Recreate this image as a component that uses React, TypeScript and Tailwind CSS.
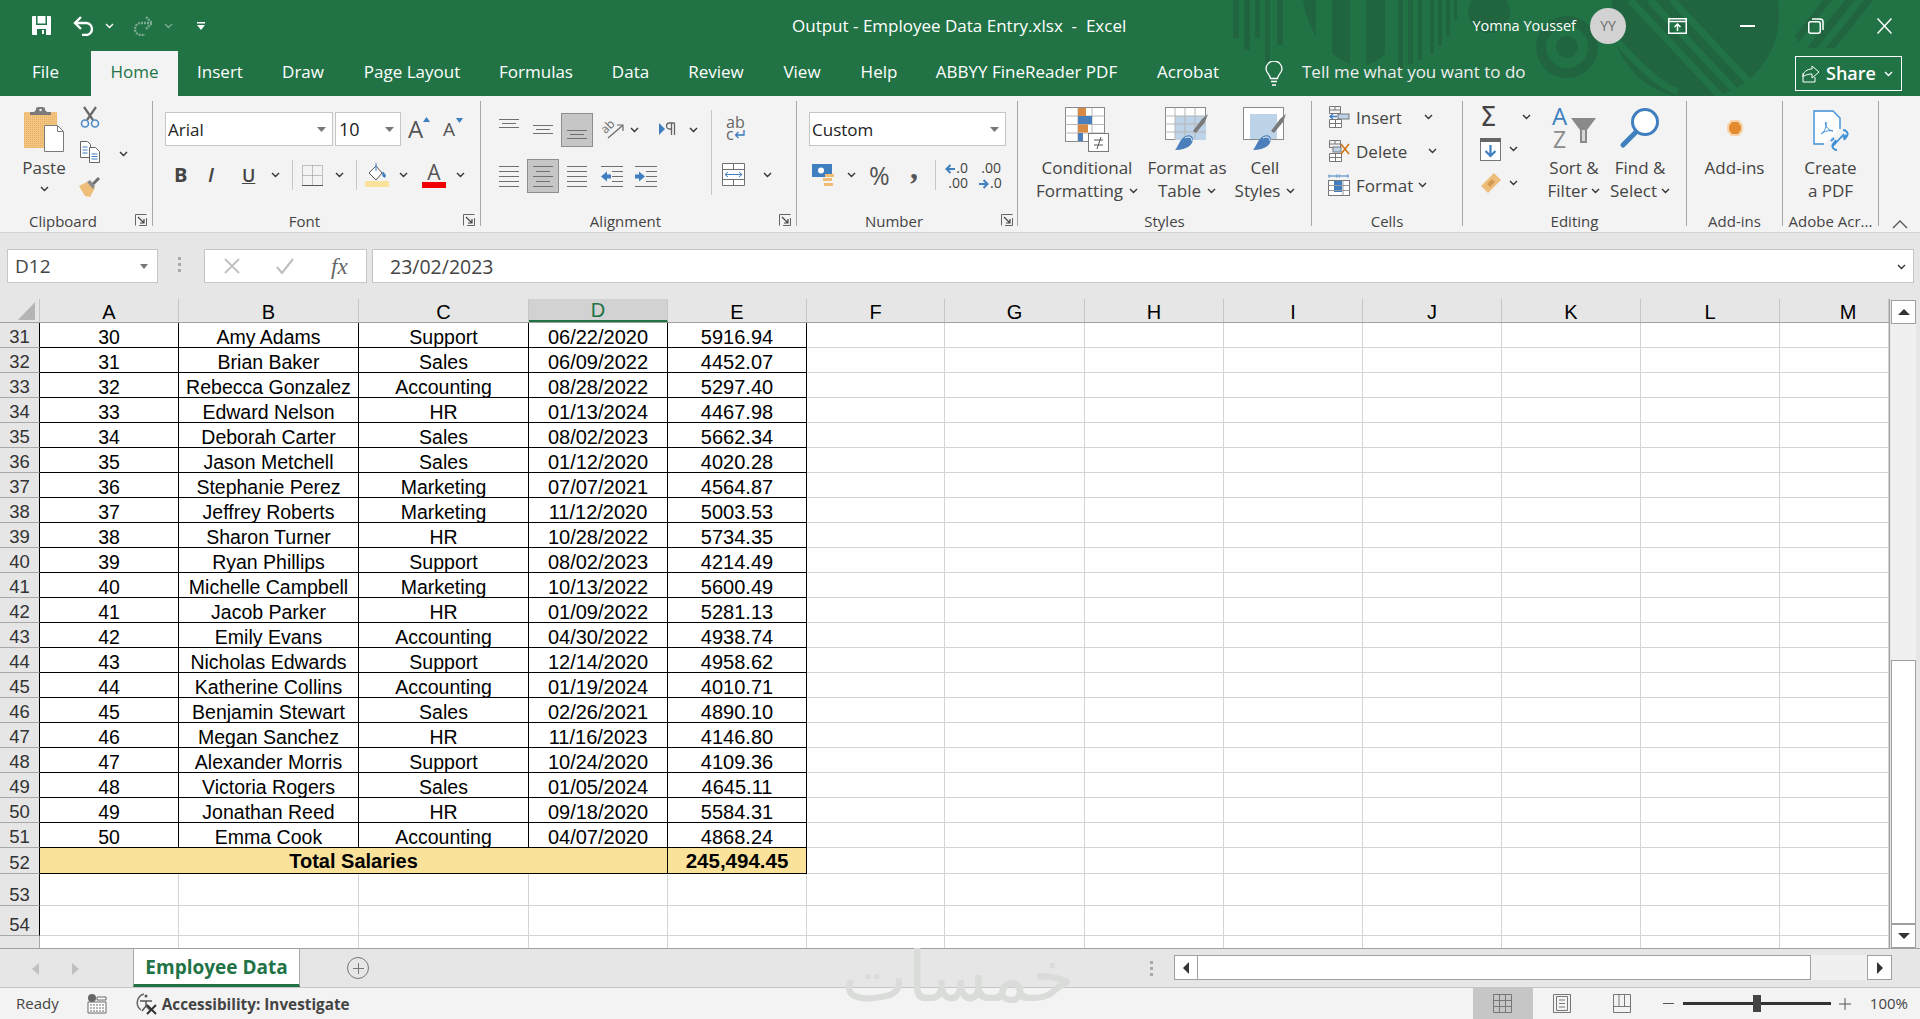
import React from 'react';

const rows: [number, string, string, string, string][] = [
  [30, 'Amy Adams', 'Support', '06/22/2020', '5916.94'],
  [31, 'Brian Baker', 'Sales', '06/09/2022', '4452.07'],
  [32, 'Rebecca Gonzalez', 'Accounting', '08/28/2022', '5297.40'],
  [33, 'Edward Nelson', 'HR', '01/13/2024', '4467.98'],
  [34, 'Deborah Carter', 'Sales', '08/02/2023', '5662.34'],
  [35, 'Jason Metchell', 'Sales', '01/12/2020', '4020.28'],
  [36, 'Stephanie Perez', 'Marketing', '07/07/2021', '4564.87'],
  [37, 'Jeffrey Roberts', 'Marketing', '11/12/2020', '5003.53'],
  [38, 'Sharon Turner', 'HR', '10/28/2022', '5734.35'],
  [39, 'Ryan Phillips', 'Support', '08/02/2023', '4214.49'],
  [40, 'Michelle Campbell', 'Marketing', '10/13/2022', '5600.49'],
  [41, 'Jacob Parker', 'HR', '01/09/2022', '5281.13'],
  [42, 'Emily Evans', 'Accounting', '04/30/2022', '4938.74'],
  [43, 'Nicholas Edwards', 'Support', '12/14/2020', '4958.62'],
  [44, 'Katherine Collins', 'Accounting', '01/19/2024', '4010.71'],
  [45, 'Benjamin Stewart', 'Sales', '02/26/2021', '4890.10'],
  [46, 'Megan Sanchez', 'HR', '11/16/2023', '4146.80'],
  [47, 'Alexander Morris', 'Support', '10/24/2020', '4109.36'],
  [48, 'Victoria Rogers', 'Sales', '01/05/2024', '4645.11'],
  [49, 'Jonathan Reed', 'HR', '09/18/2020', '5584.31'],
  [50, 'Emma Cook', 'Accounting', '04/07/2020', '4868.24'],
];

const tabs: [string, string][] = [
  ['File', 'w-[91px]'],
  ['Home', 'w-[87px] bg-[#f3f3f3] text-[#217346]'],
  ['Insert', 'w-[84px]'],
  ['Draw', 'w-[82px]'],
  ['Page Layout', 'w-[136px]'],
  ['Formulas', 'w-[112px]'],
  ['Data', 'w-[77px]'],
  ['Review', 'w-[94px]'],
  ['View', 'w-[78px]'],
  ['Help', 'w-[76px]'],
  ['ABBYY FineReader PDF', 'w-[219px]'],
  ['Acrobat', 'w-[104px]'],
];

const dataCols = ['w-[139px]', 'w-[180px]', 'w-[170px]', 'w-[139px]', 'w-[139px]'];
const emptyCols = ['w-[138px]', 'w-[140px]', 'w-[139px]', 'w-[139px]', 'w-[139px]', 'w-[139px]', 'w-[139px]', 'flex-1'];
const headers: [string, string][] = [
  ['A', 'w-[139px]'],
  ['B', 'w-[180px]'],
  ['C', 'w-[170px]'],
  ['D', 'w-[139px] bg-[#d2d2d2] text-[#217346] border-b-2 border-b-[#217346]'],
  ['E', 'w-[139px]'],
  ['F', 'w-[138px]'],
  ['G', 'w-[140px]'],
  ['H', 'w-[139px]'],
  ['I', 'w-[139px]'],
  ['J', 'w-[139px]'],
  ['K', 'w-[139px]'],
  ['L', 'w-[139px]'],
  ['M', 'flex-1 pl-[28px]'],
];

const Chev = ({ className = '', color = '#333' }: { className?: string; color?: string }) => (
  <svg width="9" height="6" viewBox="0 0 9 6" className={`shrink-0 ${className}`}>
    <path d="M1 1l3.5 3.5L8 1" fill="none" stroke={color} strokeWidth="1.4" />
  </svg>
);

const Launcher = ({ className }: { className: string }) => (
  <svg width="12" height="12" viewBox="0 0 12 12" className={`absolute bottom-[0px] ${className}`}>
    <path d="M.5 11.5V.5h11M11.5 4v7.5H4" fill="none" stroke="#666" />
    <path d="M3 3l6 6M9 5v4H5" fill="none" stroke="#444" strokeWidth="1.2" />
  </svg>
);

const Lines = ({ w, ys, inset = [] }: { w: number; ys: number[]; inset?: number[] }) => (
  <svg width={w} height={Math.max(...ys) + 1} className="shrink-0">
    {ys.map((y, i) => (
      <rect key={y} x={inset[i] || 0} y={y} width={w - 2 * (inset[i] || 0)} height="1" fill="#707070" />
    ))}
  </svg>
);

const ArrowL = () => (
  <svg width="10" height="10" viewBox="0 0 10 10" className="mr-[1px] inline">
    <path d="M10 5H2M5.500 1L1.500 5l4 4" fill="none" stroke="#3f7fbf" strokeWidth="2" />
  </svg>
);

const ArrowR = () => (
  <svg width="10" height="10" viewBox="0 0 10 10" className="mr-[1px] inline">
    <path d="M0 5h8M4.500 1l4 4-4 4" fill="none" stroke="#3f7fbf" strokeWidth="2" />
  </svg>
);

const Group = ({
  width,
  label,
  labelPad = '',
  launcher,
  children,
}: {
  width: string;
  label: string;
  labelPad?: string;
  launcher?: string;
  children: React.ReactNode;
}) => (
  <div className={`relative flex shrink-0 flex-col border-r border-[#a8a8a8] ${width}`}>
    <div className="flex min-h-0 flex-1">{children}</div>
    <div className={`h-[12px] text-center text-[15px] leading-[14px] text-[#444] ${labelPad}`}>{label}</div>
    {launcher && <Launcher className={launcher} />}
  </div>
);

const PasteIcon = () => (
  <svg width="40" height="45" viewBox="0 0 40 45">
    <defs>
      <pattern id="dots" width="2" height="2" patternUnits="userSpaceOnUse">
        <rect width="2" height="2" fill="#f3c583" />
        <rect width="1" height="1" fill="#e8ad5d" />
      </pattern>
    </defs>
    <rect x="0" y="5" width="33" height="36" rx="1" fill="url(#dots)" />
    <path d="M6 5h4l2-2V1.5C12 .5 13 0 16.500 0s4.500.5 4.500 1.500V3l2 2h4v3H6z" fill="#7a7a7a" />
    <circle cx="16.500" cy="3" r="1.200" fill="#f3f3f3" />
    <path d="M20.500 18.500h13l6 6v20h-19z" fill="#fff" stroke="#7a7a7a" />
    <path d="M33.500 18.500v6h6" fill="none" stroke="#7a7a7a" />
  </svg>
);

const CutIcon = () => (
  <svg width="20" height="22" viewBox="0 0 20 22">
    <path d="M4 1l9 13M16 1L7 14" stroke="#6a6a6a" strokeWidth="2.200" fill="none" />
    <circle cx="5" cy="17.500" r="3.500" fill="none" stroke="#4d8ac6" strokeWidth="1.600" />
    <circle cx="15" cy="17.500" r="3.500" fill="none" stroke="#4d8ac6" strokeWidth="1.600" />
  </svg>
);

const CopyIcon = () => (
  <svg width="20" height="22" viewBox="0 0 20 22">
    <path d="M.5.5h7l3 3v13H.5z" fill="#fff" stroke="#666" />
    <path d="M9.500 6.500h6l4 4v11h-10z" fill="#fff" stroke="#666" />
    <path d="M2.500 6h5M2.500 9h5M2.500 12h5M11.500 13h6M11.500 15.500h6M11.500 18h6" stroke="#3f7fbf" />
  </svg>
);

const PainterIcon = () => (
  <svg width="22" height="21" viewBox="0 0 22 21">
    <path d="M0 10l8-4 8 6-5 9-5-1-3-5z" fill="#efbd7a" />
    <path d="M8 6l3-2 5 6-2 3z" fill="#8a8a8a" />
    <path d="M13 7l6-6 2 2-6 6z" fill="#6e6e6e" />
  </svg>
);

const OrientIcon = () => (
  <svg width="22" height="20" viewBox="0 0 22 20">
    <text x="0" y="11" transform="rotate(-45 7 9)" fontSize="12" fill="#666" fontFamily="Open Sans">ab</text>
    <path d="M6 19L20 7M15 6h6v6" fill="none" stroke="#666" strokeWidth="1.200" />
  </svg>
);

const FcIcon = () => (
  <svg width="45" height="46" viewBox="0 0 45 46">
    <rect x=".5" y=".5" width="39" height="34" fill="#fff" stroke="#8a8a8a" />
    <path d="M.5 9h39M.5 17.500h39M.5 26h39M13 .5v34M27 .5v34" stroke="#b8b8b8" />
    <rect x="13" y="1" width="8" height="8" fill="#d98a42" />
    <rect x="13" y="9" width="14" height="8" fill="#4a7fbb" />
    <rect x="13" y="17.500" width="10" height="8" fill="#d98a42" />
    <rect x="13" y="26" width="5" height="8" fill="#4a7fbb" />
    <rect x="23.500" y="26.500" width="20" height="18" fill="#fff" stroke="#7a7a7a" />
    <path d="M29 33h9M29 38h9M36 30l-4 12" stroke="#555" />
  </svg>
);

const TableBrush = ({ plain = false }: { plain?: boolean }) => (
  <svg width="44" height="44" viewBox="0 0 44 44">
    <rect x=".5" y=".5" width="40" height="32" fill="#fff" stroke="#8a8a8a" />
    {plain ? (
      <rect x="7" y="7" width="27" height="25" fill="#bdd4e8" />
    ) : (
      <>
        <rect x="10" y="9" width="31" height="24" fill="#bdd4e8" />
        <path d="M.5 9h40M.5 17h40M.5 25h40M10 .5v32M20 .5v32M30 .5v32" stroke="#b5b5b5" />
      </>
    )}
    <path d="M28 24l9-12 6-5-3 8-9 11z" fill="#7a7a7a" />
    <path d="M10 43c3-3 4-9 9-13 4-3 9-2 9 2 0 5-5 11-18 11z" fill="#4a7fbb" />
    <path d="M20 31c4-2 7-1 7 3" fill="none" stroke="#fff" />
  </svg>
);

const CellsIcon = ({ kind }: { kind: 'insert' | 'delete' | 'format' }) => (
  <svg width="22" height="22" viewBox="0 0 22 22">
    {kind === 'format' ? (
      <>
        <path d="M1 2h8M1 .5v3M9 .5v3M11 2h9M11 .5v3M20 .5v3" stroke="#3f7fbf" />
        <rect x=".5" y="6.500" width="21" height="15" fill="#fff" stroke="#777" />
        <rect x="6" y="7" width="8" height="11" fill="#3f7fbf" />
        <path d="M.5 11.500h21M.5 16.500h21M15 6.500v15" stroke="#999" />
      </>
    ) : (
      <>
        <path d="M1.500.5h11v7h-11zM1.500 4h11M7 .5v3.500" fill="none" stroke="#777" />
        <path d="M1.500 13.500h12v8h-12zM1.500 17.500h12M7.500 13.500v8" fill="#fff" stroke="#777" />
        {kind === 'insert' ? (
          <>
            <rect x="10" y="8" width="11" height="5" fill="#bcd3ea" stroke="#777" />
            <path d="M9 10.500H2M5 8l-3 2.500L5 13" fill="none" stroke="#3f7fbf" strokeWidth="1.400" />
          </>
        ) : (
          <>
            <rect x="5" y="7" width="8" height="5" fill="#bcd3ea" stroke="#777" />
            <path d="M13 4l8 10M21 4l-8 10" stroke="#d0700f" strokeWidth="1.500" />
          </>
        )}
      </>
    )}
  </svg>
);

const SortIcon = () => (
  <svg width="46" height="42" viewBox="0 0 46 42">
    <text x="1" y="18" fontSize="24" fill="#3f7fbf" fontFamily="Open Sans">A</text>
    <text x="2" y="41" fontSize="23" fill="#8a8a8a" fontFamily="Open Sans">Z</text>
    <path d="M20 11h25L36 23v13h-7V23z" fill="#8a8a8a" />
    <path d="M31 23h3v11h-3z" fill="#d8d8d8" />
  </svg>
);

const FindIcon = () => (
  <svg width="42" height="42" viewBox="0 0 42 42">
    <circle cx="26" cy="15" r="12.500" fill="#fff" stroke="#3f7fbf" strokeWidth="3" />
    <path d="M17 25L4 38" stroke="#3f7fbf" strokeWidth="5" strokeLinecap="round" />
  </svg>
);

const PdfIcon = () => (
  <svg width="38" height="42" viewBox="0 0 38 42">
    <path d="M12 34H2V1h19l7 7v11" fill="#fff" stroke="#3f8fd6" strokeWidth="1.400" />
    <path d="M9 24c4-2 6-9 5-12-2 2 1 8 7 9-4-1-8 0-12 3z" fill="none" stroke="#3f8fd6" />
    <path d="M21 36l11-12M25 40c-3 0-6-3-4-6l3-4M31 20c3 0 6 3 4 6l-3 4M19 31l3-3M34 25l-3 3" fill="none" stroke="#3f8fd6" strokeWidth="1.800" />
  </svg>
);

const Pattern = () => (
  <svg width="720" height="96" viewBox="1200 0 720 96" className="absolute right-0 top-0">
    <defs>
      <clipPath id="big">
        <circle cx="1695" cy="15" r="84" />
      </clipPath>
    </defs>
    <g fill="#206540">
      <rect x="1233" y="0" width="6" height="38" />
      <rect x="1244" y="0" width="6" height="50" />
      <rect x="1255" y="0" width="5" height="38" />
      <rect x="1265" y="0" width="5" height="62" />
      <rect x="1277" y="0" width="6" height="45" />
      <path d="M1303 0h13v36c-6-9-11-22-13-36z" />
      <path d="M1332 0h18v64c-7-3-13-6-18-11z" />
      <path d="M1366 0h19v54c-5 6-12 9-19 11z" />
      <rect x="1398" y="0" width="5" height="68" />
      <rect x="1408" y="0" width="5" height="64" />
      <rect x="1418" y="0" width="4" height="60" />
      <rect x="1430" y="0" width="4" height="54" />
      <rect x="1438" y="0" width="4" height="46" />
      <rect x="1446" y="0" width="4" height="36" />
      <rect x="1454" y="0" width="3" height="20" />
      <circle cx="1489" cy="12" r="21" />
      <circle cx="1567" cy="47" r="31" />
      <circle cx="1695" cy="15" r="84" />
      <path d="M1807 48l38-48h10l-38 48zM1826 48l38-48h9l-38 48zM1795 36l28-36h9l-33 42z" />
    </g>
    <circle cx="1567" cy="47" r="21" fill="#217346" />
    <circle cx="1567" cy="47" r="11" fill="#206540" />
    <g clipPath="url(#big)" stroke="#217346" strokeWidth="7">
      <path d="M1630 0l90 96M1650 0l90 96M1672 0l90 96M1616 40q40 45 62 52" fill="none" />
    </g>
  </svg>
);

const EmptyCells = ({ grid = true }: { grid?: boolean }) => (
  <>
    {emptyCols.map((w, i) => (
      <div key={i} className={`${w} border-r border-[#d4d4d4] ${grid ? 'border-b' : ''} border-b-[#d4d4d4]`} />
    ))}
  </>
);

const RowHead = ({ n }: { n: number }) => (
  <div className="flex w-[40px] shrink-0 items-end justify-center border-r border-r-black border-b border-b-[#a8a8a8] bg-[#e6e6e6] pb-[1px] text-[18.500px] font-normal leading-none text-[#333]">
    {n}
  </div>
);

const Cell = ({ w, big, children }: { w: string; big?: boolean; children: React.ReactNode }) => (
  <div className={`flex shrink-0 items-end justify-center whitespace-nowrap border-b border-r border-black ${w} ${big ? 'text-[20px]' : ''}`}>
    {children}
  </div>
);

export default function App() {
  return (
    <div className="flex h-[1019px] w-[1920px] flex-col overflow-hidden bg-[#e6e6e6] font-['Open_Sans',sans-serif]">
      {/* title bar and tabs */}
      <div className="relative h-[96px] shrink-0 overflow-hidden bg-[#217346] text-white">
        <Pattern />
        <div className="relative flex h-[51px] items-center">
          <div className="flex w-[792px] items-center pl-[32px]">
            <svg width="19" height="19" viewBox="0 0 19 19">
              <path d="M0 1a1 1 0 011-1h17a1 1 0 011 1v17a1 1 0 01-1 1H1a1 1 0 01-1-1z" fill="#fff" />
              <rect x="4" y="0" width="11" height="9" fill="#217346" />
              <rect x="5.500" y="0" width="8" height="7.500" fill="#fff" />
              <rect x="5" y="13" width="9" height="6" fill="#217346" />
              <rect x="10" y="14" width="2" height="4" fill="#fff" />
            </svg>
            <svg width="22" height="20" viewBox="0 0 22 20" className="ml-[22px]">
              <path d="M2 7h11a6 6 0 010 12H9" fill="none" stroke="#fff" strokeWidth="2.400" />
              <path d="M8 1L2 7l6 6" fill="none" stroke="#fff" strokeWidth="2.400" />
            </svg>
            <Chev className="ml-[10px]" color="#fff" />
            <svg width="22" height="20" viewBox="0 0 22 20" className="ml-[18px] opacity-40">
              <path d="M20 7H9a6 6 0 000 12h4" fill="none" stroke="#fff" strokeWidth="2.400" strokeDasharray="2 1" />
              <path d="M14 1l6 6-6 6" fill="none" stroke="#fff" strokeWidth="2.400" strokeDasharray="2 1" />
            </svg>
            <Chev className="ml-[10px] opacity-40" color="#fff" />
            <svg width="8" height="8" viewBox="0 0 8 8" className="ml-[24px]">
              <path d="M0 0h8v1.500H0zM0 3h8L4 8z" fill="#fff" />
            </svg>
          </div>
          <div className="whitespace-pre text-[17px]">Output - Employee Data Entry.xlsx  -  Excel</div>
          <div className="flex-1" />
          <div className="text-[14.500px]">Yomna Youssef</div>
          <div className="ml-[14px] flex h-[36px] w-[36px] items-center justify-center rounded-full bg-[#d2d2d2] text-[14px] text-[#6d6d6d]">
            YY
          </div>
          <svg width="19" height="16" viewBox="0 0 19 16" className="ml-[42px]">
            <path d="M.75.75h17.500v14.500H.75zM.75 3.500h17.500" fill="none" stroke="#fff" strokeWidth="1.500" />
            <path d="M9.500 13V7M6.500 9l3-3 3 3" fill="none" stroke="#fff" strokeWidth="1.500" />
          </svg>
          <div className="ml-[53px] h-[2px] w-[15px] bg-white" />
          <svg width="16" height="16" viewBox="0 0 16 16" className="ml-[53px]">
            <rect x=".75" y="3.750" width="11.500" height="11.500" rx="2" fill="none" stroke="#fff" strokeWidth="1.500" />
            <path d="M4 1h8a3 3 0 013 3v8" fill="none" stroke="#fff" strokeWidth="1.500" />
          </svg>
          <svg width="15" height="16" viewBox="0 0 15 16" className="ml-[53px] mr-[28px]">
            <path d="M.5.500l14 15M14.500.500l-14 15" stroke="#fff" strokeWidth="1.500" />
          </svg>
        </div>
        <div className="relative flex h-[45px] items-center text-[17px]">
          {tabs.map(([name, cls]) => (
            <div key={name} className={`flex h-full shrink-0 items-center justify-center whitespace-nowrap pb-[3px] ${cls}`}>
              {name}
            </div>
          ))}
          <svg width="18" height="25" viewBox="0 0 18 25" className="ml-[25px]">
            <path d="M5.500 17.500C5 13 1 12 1 8a8 8 0 0116 0c0 4-4 5-4.500 9.500z" fill="none" stroke="#fff" strokeWidth="1.300" />
            <path d="M6 20.500h6M7 24h4" stroke="#fff" strokeWidth="1.500" />
          </svg>
          <div className="ml-[19px] pb-[3px] text-[#eee]">Tell me what you want to do</div>
          <div className="ml-auto mr-[18px] flex h-[35px] w-[107px] items-center border border-white pl-[6px] text-[18px] font-semibold">
            <svg width="18" height="18" viewBox="0 0 18 18" className="shrink-0">
              <path d="M1 8v9h12v-5M1 12c0-5 4-8 9-8V1l7 6-7 6V9c-4 0-7 1-9 3z" fill="none" stroke="#fff" />
            </svg>
            <span className="ml-[6px]">Share</span>
            <Chev className="ml-[8px]" color="#fff" />
          </div>
        </div>
      </div>

      {/* ribbon */}
      <div className="flex h-[137px] shrink-0 border-b border-[#d4d4d4] bg-[#f3f3f3] pb-[6px] pt-[5px] text-[17px] text-[#444]">
        <Group width="w-[153px]" label="Clipboard" labelPad="pr-[26px]" launcher="left-[135px]">
          <div className="ml-[22px] flex w-[44px] flex-col items-center pt-[6px]">
            <PasteIcon />
            <div className="mt-[6px] leading-[20px]">Paste</div>
            <Chev className="mt-[8px]" />
          </div>
          <div className="ml-[13px] flex w-[22px] flex-col items-center gap-[13px] pt-[5px]">
            <CutIcon />
            <CopyIcon />
            <PainterIcon />
          </div>
          <Chev className="ml-[18px] mt-[50px]" />
        </Group>

        <Group width="w-[328px]" label="Font" labelPad="pr-[24px]" launcher="left-[310px]">
          <div className="flex flex-col pl-[12px] pt-[11px]">
            <div className="flex h-[34px] items-center">
              <div className="flex h-full w-[168px] items-center justify-between border border-[#c6c6c6] bg-white pl-[2px] pr-[6px] pt-[1px] text-[#222]">
                Arial
                <svg width="9" height="5"><path d="M0 0h9L4.500 5z" fill="#777" /></svg>
              </div>
              <div className="ml-[2px] flex h-full w-[66px] items-center justify-between border border-[#c6c6c6] bg-white pl-[3px] pr-[6px] pt-[1px] text-[18px] text-[#222]">
                10
                <svg width="9" height="5"><path d="M0 0h9L4.500 5z" fill="#777" /></svg>
              </div>
              <div className="relative ml-[7px] flex w-[22px] items-end text-[24px] leading-none text-[#555]">
                A
                <svg width="7" height="5" className="absolute right-[0px] top-[0px]"><path d="M0 5h7L3.500 0z" fill="#3f7fbf" /></svg>
              </div>
              <div className="relative ml-[13px] flex w-[20px] items-end text-[19px] leading-none text-[#555]">
                A
                <svg width="7" height="5" className="absolute right-[0px] top-[-2px]"><path d="M0 0h7L3.500 5z" fill="#3f7fbf" /></svg>
              </div>
            </div>
            <div className="mt-[12px] flex h-[34px] items-center text-[#444]">
              <span className="ml-[9px] w-[14px] text-[20px] font-bold">B</span>
              <span className="ml-[20px] w-[13px] text-[20px] font-semibold italic">I</span>
              <span className="ml-[21px] w-[14px] text-[18px] font-semibold underline">U</span>
              <Chev className="ml-[15px]" />
              <div className="ml-[12px] h-[30px] w-px bg-[#c6c6c6]" />
              <svg width="21" height="21" viewBox="0 0 21 21" className="ml-[9px]">
                <path d="M.5.5h20v20H.5zM10.500.5v20M.5 10.500h20" fill="none" stroke="#888" strokeDasharray="1 1" />
                <path d="M0 20.500h21" stroke="#555" />
              </svg>
              <Chev className="ml-[12px]" />
              <div className="ml-[12px] h-[30px] w-px bg-[#c6c6c6]" />
              <svg width="24" height="24" viewBox="0 0 24 24" className="ml-[8px]">
                <path d="M4 10l7-7 6 7-6 7z" fill="#fff" stroke="#555" />
                <path d="M11 0v8M18 9c2 2 3 4 2 5s-3-1-2-5z" stroke="#3f7fbf" fill="#3f7fbf" />
                <rect x="0" y="18" width="24" height="6" fill="#fbe29b" />
              </svg>
              <Chev className="ml-[10px]" />
              <div className="ml-[14px] flex w-[24px] flex-col items-center">
                <span className="h-[18px] text-[21px] leading-[18px] text-[#555]">A</span>
                <div className="mt-[1px] h-[6px] w-[24px] bg-[#f00000]" />
              </div>
              <Chev className="ml-[10px]" />
            </div>
          </div>
        </Group>

        <Group width="w-[316px]" label="Alignment" labelPad="pr-[26px]" launcher="left-[298px]">
          <div className="flex flex-col pl-[18px] pt-[12px]">
            <div className="flex h-[34px] items-start">
              <div className="mt-[6px]"><Lines w={20} ys={[0, 4, 8]} inset={[0, 3, 0]} /></div>
              <div className="ml-[14px] mt-[12px]"><Lines w={20} ys={[0, 4, 8]} inset={[0, 3, 0]} /></div>
              <div className="ml-[8px] flex h-[34px] w-[32px] items-end justify-center border border-[#8e8e8e] bg-[#c6c6c6] pb-[7px]">
                <Lines w={20} ys={[0, 4, 8]} inset={[0, 3, 0]} />
              </div>
              <div className="ml-[9px] mt-[6px]"><OrientIcon /></div>
              <Chev className="ml-[6px] mt-[14px]" />
              <svg width="18" height="14" viewBox="0 0 18 14" className="ml-[20px] mt-[9px]">
                <path d="M0 1l6 6-6 6z" fill="#3f7fbf" />
                <path d="M12.500 1v12M15.500 1v12M15.500 1h-5a3 3 0 000 6h2" fill="none" stroke="#666" strokeWidth="1.300" />
              </svg>
              <Chev className="ml-[12px] mt-[14px]" />
            </div>
            <div className="mt-[12px] flex h-[34px] items-center">
              <Lines w={20} ys={[0, 5, 10, 15, 20]} inset={[0, 0, 0, 0, 0]} />
              <div className="ml-[8px] flex h-[34px] w-[32px] items-center justify-center border border-[#8e8e8e] bg-[#c6c6c6]">
                <Lines w={20} ys={[0, 5, 10, 15, 20]} inset={[0, 3, 0, 3, 0]} />
              </div>
              <div className="ml-[8px]"><Lines w={20} ys={[0, 5, 10, 15, 20]} inset={[0, 0, 0, 0, 0]} /></div>
              <svg width="22" height="21" viewBox="0 0 22 21" className="ml-[14px]">
                <path d="M0 .5h22M11 5.500h11M11 10.500h11M11 15.500h11M0 20.500h22" stroke="#707070" />
                <path d="M0 10.500l6-5v3h4v4H6v3z" fill="#3f7fbf" />
              </svg>
              <svg width="22" height="21" viewBox="0 0 22 21" className="ml-[12px]">
                <path d="M0 .5h22M11 5.500h11M11 10.500h11M11 15.500h11M0 20.500h22" stroke="#707070" />
                <path d="M10 10.500l-6-5v3H0v4h4v3z" fill="#3f7fbf" />
              </svg>
            </div>
          </div>
          <div className="ml-[13px] mt-[9px] h-[85px] w-px bg-[#c6c6c6]" />
          <div className="ml-[10px] flex flex-col pt-[15px]">
            <div className="h-[26px] pl-[4px] text-[16px] leading-[12px] text-[#666]">
              ab
              <br />
              c<span className="text-[#3f7fbf]">↵</span>
            </div>
            <div className="mt-[21px] flex items-center">
              <svg width="23" height="23" viewBox="0 0 23 23">
                <path d="M.5.500h22v22H.5zM.5 6.500h22M.5 16.500h22M11.500.500v6M11.500 16.500v6" fill="#fff" stroke="#707070" />
                <path d="M3 11.500h17M6 9l-3 2.500L6 14M17 9l3 2.500L17 14" fill="none" stroke="#3f7fbf" />
              </svg>
              <Chev className="ml-[18px]" />
            </div>
          </div>
        </Group>

        <Group width="w-[221px]" label="Number" labelPad="pr-[26px]" launcher="left-[204px]">
          <div className="flex flex-col pl-[12px] pt-[11px]">
            <div className="flex h-[34px] w-[197px] items-center justify-between border border-[#c6c6c6] bg-white pl-[2px] pr-[6px] pt-[1px] text-[#222]">
              Custom
              <svg width="9" height="5"><path d="M0 0h9L4.500 5z" fill="#777" /></svg>
            </div>
            <div className="mt-[12px] flex h-[34px] items-center">
              <svg width="24" height="24" viewBox="0 0 24 24" className="ml-[3px]">
                <rect x="0" y="1" width="20" height="13" fill="#3f7fbf" />
                <circle cx="9" cy="7.500" r="3" fill="#fff" />
                <path d="M13 11h9v3h-9zM11 15h9v3h-9zM12 20h9v3h-9z" fill="#f0bd74" />
              </svg>
              <Chev className="ml-[11px]" />
              <span className="ml-[13px] w-[22px] text-[25px] leading-none text-[#555]">%</span>
              <span className="mb-[14px] ml-[19px] w-[10px] font-['Liberation_Serif',serif] text-[32px] font-bold leading-[20px] text-[#555]">,</span>
              <div className="ml-[15px] h-[30px] w-px bg-[#c6c6c6]" />
              <div className="ml-[7px] w-[25px] whitespace-nowrap text-right text-[14px] font-medium leading-[15px] text-[#444]">
                <ArrowL />.0
                <br />
                .00
              </div>
              <div className="ml-[11px] w-[22px] whitespace-nowrap text-right text-[14px] font-medium leading-[15px] text-[#444]">
                .00
                <br />
                <ArrowR />.0
              </div>
            </div>
          </div>
        </Group>

        <Group width="w-[294px]" label="Styles">
          <div className="ml-[4px] flex w-[130px] flex-col items-center pt-[6px]">
            <FcIcon />
            <div className="mt-[3px] whitespace-nowrap leading-[23px]">Conditional</div>
            <div className="flex items-center gap-[6px] whitespace-nowrap leading-[23px]">Formatting <Chev /></div>
          </div>
          <div className="flex w-[70px] flex-col items-center pt-[6px]">
            <TableBrush />
            <div className="mt-[5px] whitespace-nowrap leading-[23px]">Format as</div>
            <div className="flex items-center gap-[6px] leading-[23px]">Table <Chev /></div>
          </div>
          <div className="ml-[8px] flex w-[70px] flex-col items-center pt-[6px]">
            <TableBrush plain />
            <div className="mt-[5px] leading-[23px]">Cell</div>
            <div className="flex items-center gap-[6px] leading-[23px]">Styles <Chev /></div>
          </div>
        </Group>

        <Group width="w-[151px]" label="Cells">
          <div className="flex flex-col gap-[12px] pl-[16px] pt-[5px]">
            <div className="flex h-[22px] items-center">
              <CellsIcon kind="insert" />
              <span className="ml-[6px] w-[68px] pt-[2px]">Insert</span>
              <Chev />
            </div>
            <div className="flex h-[22px] items-center">
              <CellsIcon kind="delete" />
              <span className="ml-[6px] w-[72px] pt-[2px]">Delete</span>
              <Chev />
            </div>
            <div className="flex h-[22px] items-center">
              <CellsIcon kind="format" />
              <span className="ml-[6px] w-[62px] pt-[2px]">Format</span>
              <Chev />
            </div>
          </div>
        </Group>

        <Group width="w-[224px]" label="Editing">
          <div className="flex w-[78px] shrink-0 flex-col pl-[17px] pt-[5px]">
            <div className="flex h-[22px] items-center">
              <span className="w-[23px] font-['DejaVu_Sans',sans-serif] text-[26px] leading-none text-[#444]">Σ</span>
              <Chev className="ml-[19px]" />
            </div>
            <div className="mt-[10px] flex h-[22px] items-center">
              <svg width="22" height="23" viewBox="0 0 22 23">
                <rect x=".5" y=".5" width="20" height="22" fill="#fff" stroke="#777" />
                <rect x="0" y="0" width="21" height="4" fill="#666" />
                <path d="M10.500 7v11M5.500 13l5 5 5-5" fill="none" stroke="#3f7fbf" strokeWidth="2.200" />
              </svg>
              <Chev className="ml-[7px]" />
            </div>
            <div className="mt-[12px] flex h-[22px] items-center">
              <svg width="22" height="22" viewBox="0 0 22 22">
                <path d="M1 14L14 1l7 7L8 21z" fill="#efbd7a" />
                <path d="M7 12l5-5 3 3-5 5z" fill="#d49a55" />
              </svg>
              <Chev className="ml-[7px]" />
            </div>
          </div>
          <div className="flex w-[66px] shrink-0 flex-col items-center pt-[6px]">
            <SortIcon />
            <div className="mt-[7px] whitespace-nowrap leading-[23px]">Sort &amp;</div>
            <div className="flex items-center gap-[4px] leading-[23px]">Filter <Chev /></div>
          </div>
          <div className="flex w-[66px] shrink-0 flex-col items-center pt-[6px]">
            <FindIcon />
            <div className="mt-[7px] whitespace-nowrap leading-[23px]">Find &amp;</div>
            <div className="flex items-center gap-[4px] leading-[23px]">Select <Chev /></div>
          </div>
        </Group>

        <Group width="w-[96px]" label="Add-ins">
          <div className="flex w-full flex-col items-center pt-[18px]">
            <svg width="16" height="18" viewBox="0 0 16 18">
              <path d="M4 1h8l4 5v6l-4 5H4L0 12V6z" fill="#f4d3a8" />
              <path d="M5 3h6l3 4v4l-3 4H5l-3-4V7z" fill="#e58a2e" />
            </svg>
            <div className="mt-[19px] leading-[23px]">Add-ins</div>
          </div>
        </Group>

        <Group width="w-[96px]" label="Adobe Acr...">
          <div className="flex w-full flex-col items-center pt-[9px]">
            <PdfIcon />
            <div className="mt-[4px] leading-[23px]">Create</div>
            <div className="leading-[23px]">a PDF</div>
          </div>
        </Group>

        <div className="flex flex-1 items-end justify-center">
          <svg width="16" height="10" viewBox="0 0 16 10" className="mb-[-3px]">
            <path d="M1 9l7-7 7 7" fill="none" stroke="#555" strokeWidth="1.300" />
          </svg>
        </div>
      </div>

      {/* formula bar */}
      <div className="flex h-[66px] shrink-0 items-start pt-[16px] text-[#444]">
        <div className="ml-[7px] flex h-[34px] w-[151px] items-center justify-between border border-[#c6c6c6] bg-white pl-[7px] pr-[9px] pt-[1px] text-[19px]">
          D12
          <svg width="8" height="5"><path d="M0 0h8L4 5z" fill="#777" /></svg>
        </div>
        <div className="ml-[20px] mt-[8px] flex w-[4px] flex-col gap-[3px]">
          <div className="h-[3px] w-[3px] bg-[#a8a8a8]" />
          <div className="h-[3px] w-[3px] bg-[#a8a8a8]" />
          <div className="h-[3px] w-[3px] bg-[#a8a8a8]" />
        </div>
        <div className="ml-[22px] flex h-[34px] w-[163px] items-center border border-[#c6c6c6] bg-white pl-[19px]">
          <svg width="16" height="16" viewBox="0 0 16 16">
            <path d="M1 1l14 14M15 1L1 15" stroke="#c0c0c0" strokeWidth="1.800" />
          </svg>
          <svg width="18" height="16" viewBox="0 0 18 16" className="ml-[36px]">
            <path d="M1 9l5 6L17 1" fill="none" stroke="#c0c0c0" strokeWidth="2.200" />
          </svg>
          <span className="ml-[37px] font-['Liberation_Serif',serif] text-[23px] italic leading-none text-[#666]">fx</span>
        </div>
        <div className="ml-[5px] flex h-[34px] flex-1 items-center justify-between border border-[#c6c6c6] bg-white pl-[17px] pr-[7px] pt-[1px] text-[19.500px]">
          23/02/2023
          <Chev />
        </div>
        <div className="w-[6px]" />
      </div>

      {/* sheet */}
      <div className="flex h-[649px] shrink-0">
        <div className="flex w-[1890px] flex-col border-r border-[#a0a0a0] bg-white font-['Liberation_Sans',Arial,sans-serif] text-black">
          <div className="flex h-[24px] shrink-0 border-b border-[#a0a0a0] bg-[#e6e6e6] text-[20px] leading-none">
            <div className="flex w-[40px] shrink-0 items-end justify-end border-r border-[#c6c6c6] pb-[2px] pr-[4px]">
              <svg width="17" height="18"><path d="M0 18h17V0z" fill="#b5b5b5" /></svg>
            </div>
            {headers.map(([h, cls]) => (
              <div key={h} className={`flex shrink-0 items-end justify-center border-r border-r-[#c6c6c6] ${cls}`}>
                {h}
              </div>
            ))}
          </div>
          {rows.map(([id, name, dept, date, pay], i) => (
            <div key={id} className="flex h-[25px] shrink-0 text-[19.500px] leading-none">
              <RowHead n={31 + i} />
              <Cell w="w-[139px]">{id}</Cell>
              <Cell w="w-[180px]">{name}</Cell>
              <Cell w="w-[170px]">{dept}</Cell>
              <Cell w="w-[139px]" big>{date}</Cell>
              <Cell w="w-[139px]" big>{pay}</Cell>
              <EmptyCells />
            </div>
          ))}
          <div className="flex h-[26px] shrink-0 text-[20px] font-bold leading-none">
            <RowHead n={52} />
            <div className="flex w-[628px] shrink-0 items-end justify-center border-b border-r border-black bg-[#fbe29b] pb-[2px]">Total Salaries</div>
            <div className="flex w-[139px] shrink-0 items-end justify-center border-b border-r border-black bg-[#fbe29b] pb-[2px] text-[20.500px]">245,494.45</div>
            <EmptyCells />
          </div>
          {[
            { n: 53, h: 'h-[32px]' },
            { n: 54, h: 'h-[30px]' },
          ].map(({ n, h }) => (
            <div key={n} className={`flex shrink-0 ${h} leading-none`}>
              <RowHead n={n} />
              {dataCols.map((w, i) => (
                <div key={i} className={`${w} shrink-0 border-b border-r border-[#d4d4d4]`} />
              ))}
              <EmptyCells />
            </div>
          ))}
          <div className="flex min-h-0 flex-1">
            <div className="w-[40px] shrink-0 border-r border-[#a8a8a8] bg-[#e6e6e6]" />
            {dataCols.map((w, i) => (
              <div key={i} className={`${w} shrink-0 border-r border-[#d4d4d4]`} />
            ))}
            <EmptyCells grid={false} />
          </div>
        </div>
        <div className="flex w-[29px] flex-col items-center pl-[1px] pr-[3px] pt-[1px]">
          <div className="flex h-[24px] w-[25px] shrink-0 items-center justify-center border border-[#a0a0a0] bg-white">
            <svg width="12" height="6"><path d="M0 6h12L6 0z" fill="#333" /></svg>
          </div>
          <div className="h-[336px] w-full shrink-0 bg-[#f0f0f0]" />
          <div className="h-[264px] w-[25px] shrink-0 border border-[#a0a0a0] bg-white" />
          <div className="flex h-[24px] w-[25px] shrink-0 items-center justify-center border border-[#a0a0a0] bg-white">
            <svg width="12" height="6"><path d="M0 0h12L6 6z" fill="#333" /></svg>
          </div>
        </div>
      </div>

      {/* sheet tabs */}
      <div className="relative flex h-[39px] shrink-0 border-t border-[#a0a0a0] bg-[#e6e6e6]">
        <svg width="7" height="12" className="ml-[32px] mt-[14px]"><path d="M7 0v12L0 6z" fill="#c0c0c0" /></svg>
        <svg width="7" height="12" className="ml-[33px] mt-[14px]"><path d="M0 0v12l7-6z" fill="#c0c0c0" /></svg>
        <div className="ml-[54px] flex h-[38px] w-[167px] items-center justify-center border-x border-b-[3px] border-x-[#a8a8a8] border-b-[#217346] bg-white pt-[2px] text-[19px] font-bold text-[#217346]">
          Employee Data
        </div>
        <div className="ml-[47px] mt-[8px] flex h-[22px] w-[22px] items-center justify-center rounded-full border border-[#777]">
          <svg width="11" height="11"><path d="M5.500 0v11M0 5.500h11" stroke="#777" /></svg>
        </div>
        <div className="ml-[781px] mt-[12px] flex w-[4px] flex-col gap-[3px]">
          <div className="h-[3px] w-[3px] bg-[#a8a8a8]" />
          <div className="h-[3px] w-[3px] bg-[#a8a8a8]" />
          <div className="h-[3px] w-[3px] bg-[#a8a8a8]" />
        </div>
        <div className="ml-[20px] mt-[6px] flex h-[25px] w-[718px]">
          <div className="flex w-[24px] shrink-0 items-center justify-center border border-[#a0a0a0] bg-white">
            <svg width="6" height="12"><path d="M6 0v12L0 6z" fill="#333" /></svg>
          </div>
          <div className="w-[613px] shrink-0 border-y border-r border-[#a0a0a0] bg-white" />
          <div className="w-[56px] shrink-0 bg-[#f0f0f0]" />
          <div className="flex w-[25px] shrink-0 items-center justify-center border border-[#a0a0a0] bg-white">
            <svg width="6" height="12"><path d="M0 0v12l6-6z" fill="#333" /></svg>
          </div>
        </div>
        <div dir="rtl" className="pointer-events-none absolute left-[845px] top-[-8px] z-10 w-[230px] whitespace-nowrap text-center font-['DejaVu_Sans',sans-serif] text-[70px] leading-[72px] text-[#d9dcd9]">
          خمسات
        </div>
      </div>

      {/* status bar */}
      <div className="flex h-[32px] shrink-0 items-center border-t border-[#c6c6c6] bg-[#f3f3f3] text-[15px] text-[#444]">
        <span className="ml-[16px]">Ready</span>
        <svg width="20" height="20" viewBox="0 0 20 20" className="ml-[28px]">
          <circle cx="5" cy="4" r="4" fill="#666" />
          <path d="M1 8h18v11H1zM10 3h9v3h-9z" fill="#fff" stroke="#666" />
          <path d="M3 11h14M3 14h14M3 17h14" stroke="#666" strokeDasharray="2 1" />
        </svg>
        <svg width="22" height="22" viewBox="0 0 22 22" className="ml-[29px]">
          <path d="M8 1a9 9 0 00-3 16" fill="none" stroke="#666" strokeWidth="1.500" />
          <circle cx="10" cy="3" r="1.500" fill="#555" />
          <path d="M4 8h12M10 8v5l-4 5M10 13l4 4" fill="none" stroke="#555" strokeWidth="1.500" />
          <path d="M11 12l9 9M20 12l-9 9" stroke="#333" strokeWidth="2" />
        </svg>
        <span className="ml-[4px] pt-[2px] text-[15.300px] font-bold">Accessibility: Investigate</span>
        <div className="ml-auto flex h-full w-[60px] items-center justify-center bg-[#c6c6c6]">
          <svg width="19" height="19" viewBox="0 0 19 19">
            <path d="M.5.500h18v18H.5zM6.500.500v18M12.500.500v18M.5 6.500h18M.5 12.500h18" fill="none" stroke="#777" />
          </svg>
        </div>
        <svg width="18" height="19" viewBox="0 0 18 19" className="ml-[20px]">
          <path d="M.5.500h17v18H.5zM3.500 2.500h11v14h-11zM6 6h6M6 9.500h6M6 13h6" fill="none" stroke="#777" />
        </svg>
        <svg width="18" height="19" viewBox="0 0 18 19" className="ml-[42px]">
          <path d="M.5.500h17v18H.5zM.5 12.500h17M6 .500v12M11.500.500v12" fill="none" stroke="#777" />
        </svg>
        <div className="ml-[32px] h-px w-[11px] bg-[#555]" />
        <div className="relative ml-[9px] h-[3px] w-[148px] bg-[#333]">
          <div className="absolute left-[70px] top-[-7px] h-[17px] w-[8px] bg-[#444]" />
        </div>
        <svg width="12" height="12" className="ml-[8px]"><path d="M6 0v12M0 6h12" stroke="#555" /></svg>
        <span className="ml-[19px] mr-[12px]">100%</span>
      </div>
    </div>
  );
}
